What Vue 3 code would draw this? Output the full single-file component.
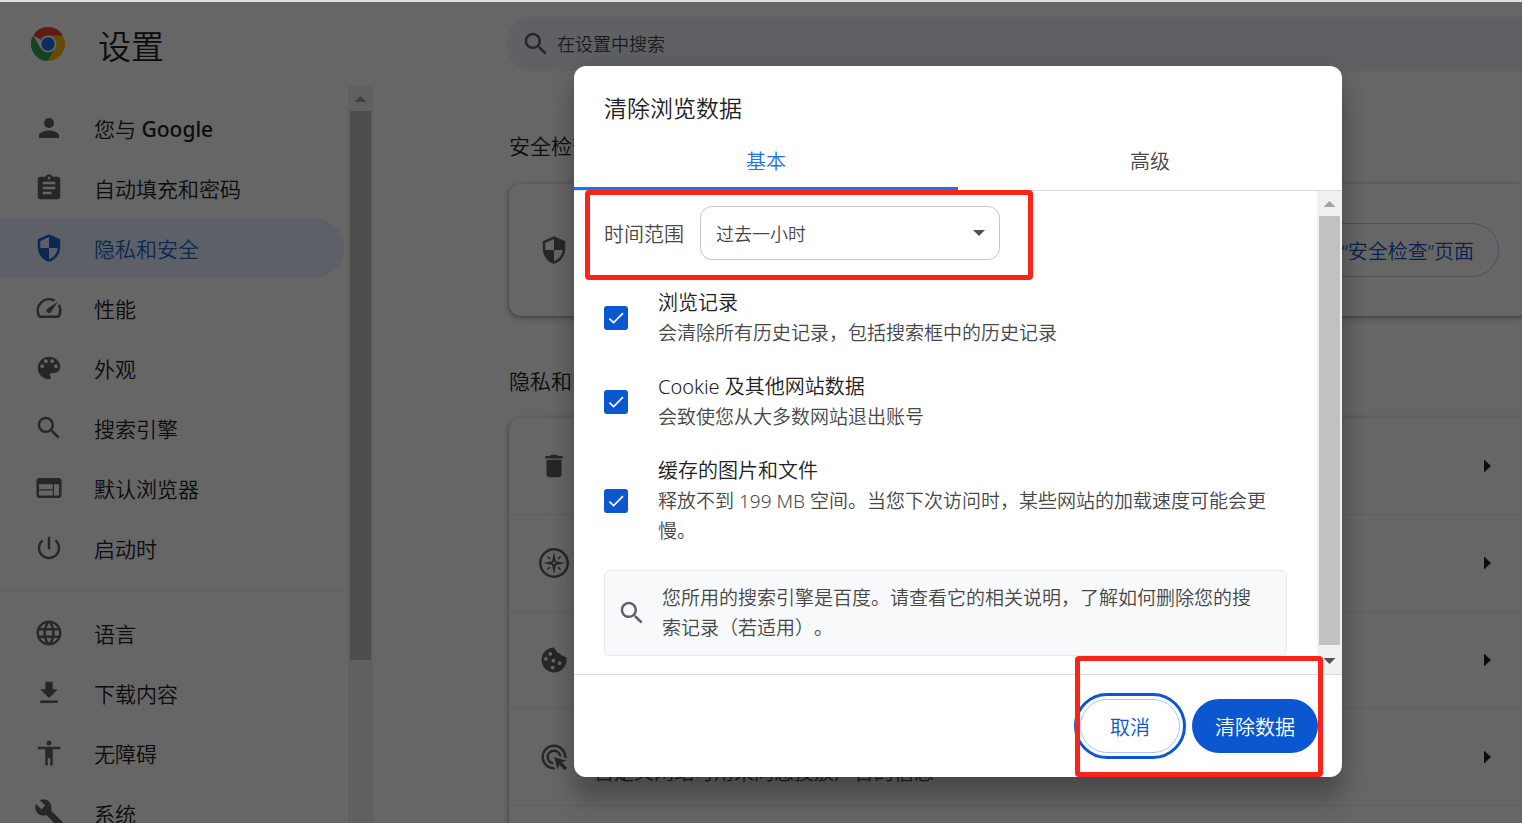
<template>
  <div class="app">
    <div class="page">
      <aside class="sidebar">
        <div class="brand">
          <svg class="logo" viewBox="0 0 48 48" aria-hidden="true">
            <path fill="#ea4335" d="M24 24 L3.2 12 A24 24 0 0 1 44.8 12 Z" />
            <path fill="#34a853" d="M3.2 12 A24 24 0 0 0 24 48 L34.4 30 L24 24 L13.6 30 Z" />
            <path fill="#fbbc04" d="M44.8 12 A24 24 0 0 1 24 48 L34.4 30 L24 24 L24 12 Z" />
            <circle cx="24" cy="24" r="12" fill="#fff" />
            <circle cx="24" cy="24" r="9.4" fill="#1a73e8" />
          </svg>
          <h1>设置</h1>
        </div>
        <div class="nav-wrap">
          <nav class="nav">
            <template v-for="item in navItems" :key="item.label">
              <hr v-if="item.divided" />
              <a href="#" class="nav-item" :class="{ active: item.active }" @click.prevent>
                <svg class="icon" viewBox="0 0 24 24" aria-hidden="true"><path :d="icons[item.icon]" /></svg>
                <span>{{ item.label }}<b v-if="item.strong">{{ item.strong }}</b></span>
              </a>
            </template>
          </nav>
          <div class="scrollbar" aria-hidden="true">
            <i class="arrow up"></i>
            <div class="thumb side-thumb"></div>
          </div>
        </div>
      </aside>

      <main class="content">
        <label class="search-bar">
          <svg class="icon" viewBox="0 0 24 24" aria-hidden="true"><path :d="icons.search" /></svg>
          <input type="text" placeholder="在设置中搜索" aria-label="在设置中搜索" />
        </label>

        <div class="sections">
          <h2>安全检查</h2>
          <div class="card check-card">
            <svg class="icon" viewBox="0 0 24 24" aria-hidden="true"><path :d="icons.shield" /></svg>
            <button class="outline-btn">前往“安全检查”页面</button>
          </div>

          <h2 class="privacy-title">隐私和安全</h2>
          <div class="card">
            <div v-for="row in rows" :key="row.icon" class="row">
              <svg class="icon" viewBox="0 0 24 24" aria-hidden="true">
                <path fill-rule="evenodd" :d="icons[row.icon]" />
              </svg>
              <div class="row-text">
                <div v-if="row.sub" class="sub">{{ row.sub }}</div>
              </div>
              <i class="arrow right"></i>
            </div>
          </div>
        </div>
      </main>
    </div>

    <div class="overlay">
      <div class="dialog" role="dialog" aria-labelledby="dialog-title">
        <h2 id="dialog-title" class="dialog-title">清除浏览数据</h2>
        <div class="tabs" role="tablist">
          <button
            v-for="tab in tabs"
            :key="tab"
            class="tab"
            :class="{ active: tab === currentTab }"
            role="tab"
            :aria-selected="tab === currentTab"
            @click="currentTab = tab"
          >
            {{ tab }}
          </button>
        </div>

        <div class="dialog-body">
          <div class="body-content">
            <div class="time-row marked">
              <label for="time-range">时间范围</label>
              <div class="select-wrap">
                <select id="time-range" v-model="timeRange">
                  <option v-for="range in ranges" :key="range">{{ range }}</option>
                </select>
                <i class="arrow down"></i>
              </div>
            </div>

            <label v-for="item in items" :key="item.title" class="check-item">
              <input v-model="item.checked" type="checkbox" />
              <span>
                <span class="item-title">{{ item.title }}</span>
                <span class="item-desc">{{ item.desc }}</span>
              </span>
            </label>

            <div class="notice">
              <svg class="icon" viewBox="0 0 24 24" aria-hidden="true"><path :d="icons.search" /></svg>
              <p>您所用的搜索引擎是百度。请查看它的相关说明，了解如何删除您的搜索记录（若适用）。</p>
            </div>
          </div>
          <div class="scrollbar" aria-hidden="true">
            <i class="arrow up"></i>
            <div class="thumb"></div>
            <i class="arrow down"></i>
          </div>
        </div>

        <div class="dialog-footer">
          <div class="actions marked">
            <button class="cancel-btn">取消</button>
            <button class="clear-btn">清除数据</button>
          </div>
        </div>
      </div>
    </div>
  </div>
</template>

<script setup>
import { ref } from 'vue'

const icons = {
  person: 'M12 12c2.21 0 4-1.79 4-4s-1.79-4-4-4-4 1.79-4 4 1.79 4 4 4zm0 2c-2.67 0-8 1.34-8 4v2h16v-2c0-2.66-5.33-4-8-4z',
  assignment: 'M19 3h-4.18C14.4 1.84 13.3 1 12 1c-1.3 0-2.4.84-2.82 2H5c-1.1 0-2 .9-2 2v14c0 1.1.9 2 2 2h14c1.1 0 2-.9 2-2V5c0-1.1-.9-2-2-2zm-7 0c.55 0 1 .45 1 1s-.45 1-1 1-1-.45-1-1 .45-1 1-1zm2 14H7v-2h7v2zm3-4H7v-2h10v2zm0-4H7V7h10v2z',
  shield: 'M12 1L3 5v6c0 5.55 3.84 10.74 9 12 5.16-1.26 9-6.45 9-12V5l-9-4zm0 10.99h7c-.53 4.12-3.28 7.79-7 8.94V12H5V6.3l7-3.11v8.8z',
  speed: 'M20.38 8.57l-1.23 1.85a8 8 0 0 1-.22 7.58H5.07A8 8 0 0 1 15.58 6.85l1.85-1.23A10 10 0 0 0 3.35 19a2 2 0 0 0 1.72 1h13.85a2 2 0 0 0 1.74-1 10 10 0 0 0-.27-10.44zm-9.79 6.84a2 2 0 0 0 2.83 0l5.66-8.49-8.49 5.66a2 2 0 0 0 0 2.83z',
  palette: 'M12 3c-4.97 0-9 4.03-9 9s4.03 9 9 9c.83 0 1.5-.67 1.5-1.5 0-.39-.15-.74-.39-1.01-.23-.26-.38-.61-.38-.99 0-.83.67-1.5 1.5-1.5H16c2.76 0 5-2.24 5-5 0-4.42-4.03-8-9-8zm-5.5 9c-.83 0-1.5-.67-1.5-1.5S5.67 9 6.5 9 8 9.67 8 10.5 7.33 12 6.5 12zm3-4C8.67 8 8 7.33 8 6.5S8.67 5 9.5 5s1.5.67 1.5 1.5S10.33 8 9.5 8zm5 0c-.83 0-1.5-.67-1.5-1.5S13.67 5 14.5 5s1.5.67 1.5 1.5S15.33 8 14.5 8zm3 4c-.83 0-1.5-.67-1.5-1.5S16.67 9 17.5 9s1.5.67 1.5 1.5-.67 1.5-1.5 1.5z',
  search: 'M15.5 14h-.79l-.28-.27C15.41 12.59 16 11.11 16 9.5 16 5.91 13.09 3 9.5 3S3 5.91 3 9.5 5.91 16 9.5 16c1.61 0 3.09-.59 4.23-1.57l.27.28v.79l5 4.99L20.49 19l-4.99-5zm-6 0C7.01 14 5 11.99 5 9.5S7.01 5 9.5 5 14 7.01 14 9.5 11.99 14 9.5 14z',
  web: 'M20 4H4c-1.1 0-1.99.9-1.99 2L2 18c0 1.1.9 2 2 2h16c1.1 0 2-.9 2-2V6c0-1.1-.9-2-2-2zm-5 14H4v-4h11v4zm0-5H4V9h11v4zm5 5h-4V9h4v9z',
  power: 'M13 3h-2v10h2V3zm4.83 2.17l-1.42 1.42C17.99 7.86 19 9.81 19 12c0 3.87-3.13 7-7 7s-7-3.13-7-7c0-2.19 1.01-4.14 2.58-5.42L6.17 5.17C4.23 6.82 3 9.26 3 12c0 4.97 4.03 9 9 9s9-4.03 9-9c0-2.74-1.23-5.18-3.17-6.83z',
  globe: 'M11.99 2C6.47 2 2 6.48 2 12s4.47 10 9.99 10C17.52 22 22 17.52 22 12S17.52 2 11.99 2zm6.93 6h-2.95c-.32-1.25-.78-2.45-1.38-3.56 1.84.63 3.37 1.91 4.33 3.56zM12 4.04c.83 1.2 1.48 2.53 1.91 3.96h-3.82c.43-1.43 1.08-2.76 1.91-3.96zM4.26 14C4.1 13.36 4 12.69 4 12s.1-1.36.26-2h3.38c-.08.66-.14 1.32-.14 2s.06 1.34.14 2H4.26zm.82 2h2.95c.32 1.25.78 2.45 1.38 3.56-1.84-.63-3.37-1.9-4.33-3.56zm2.95-8H5.08c.96-1.66 2.49-2.93 4.33-3.56C8.81 5.55 8.35 6.75 8.03 8zM12 19.96c-.83-1.2-1.48-2.53-1.91-3.96h3.82c-.43 1.43-1.08 2.76-1.91 3.96zM14.34 14H9.66c-.09-.66-.16-1.32-.16-2s.07-1.35.16-2h4.68c.09.65.16 1.32.16 2s-.07 1.34-.16 2zm.25 5.56c.6-1.11 1.06-2.31 1.38-3.56h2.95c-.96 1.65-2.49 2.93-4.33 3.56zM16.36 14c.08-.66.14-1.32.14-2s-.06-1.34-.14-2h3.38c.16.64.26 1.31.26 2s-.1 1.36-.26 2h-3.38z',
  download: 'M19 9h-4V3H9v6H5l7 7 7-7zM5 18v2h14v-2H5z',
  accessibility: 'M12 2c1.1 0 2 .9 2 2s-.9 2-2 2-2-.9-2-2 .9-2 2-2zm9 7h-6v13h-2v-6h-2v6H9V9H3V7h18v2z',
  wrench: 'M22.7 19l-9.1-9.1c.9-2.3.4-5-1.5-6.9-2-2-5-2.4-7.4-1.3L9 6 6 9 1.6 4.7C.4 7.1.9 10.1 2.9 12.1c1.9 1.9 4.6 2.4 6.9 1.5l9.1 9.1c.4.4 1 .4 1.4 0l2.3-2.3c.5-.4.5-1.1.1-1.4z',
  trash: 'M6 19c0 1.1.9 2 2 2h8c1.1 0 2-.9 2-2V7H6v12zM19 4h-3.5l-1-1h-5l-1 1H5v2h14V4z',
  compass: 'M12 0a12 12 0 1 0 0 24 12 12 0 0 0 0-24zm0 2a10 10 0 1 1 0 20 10 10 0 0 1 0-20zM12 3l1.5 7.5L21 12l-7.5 1.5L12 21l-1.5-7.5L3 12l7.5-1.5zM12 11a1 1 0 1 0 0 2 1 1 0 0 0 0-2zM6.3 7l.7-.7 2.3 1.900-1.1 1.1zM17 6.3l.7.7-1.9 2.3-1.1-1.1zM17.7 17l-.7.7-2.3-1.9 1.1-1.1zM7 17.7l-.7-.7 1.9-2.3 1.1 1.1z',
  cookie: 'M12.5 2A10 10 0 1 0 22 11.5c0-.9-.1-1.5-.3-2.2-.9.5-2 .1-2.3-.9-1.2.4-2.4-.5-2.3-1.9-1.7.3-3-.6-3.1-2-1.1-.2-1.7-1.2-1.5-2.500zM9 5.500a1.5 1.5 0 1 1 0 3 1.5 1.5 0 0 1 0-3zM5.5 9.5a1.5 1.5 0 1 1 0 3 1.5 1.5 0 0 1 0-3zM11.5 11a1.5 1.5 0 1 1 0 3 1.5 1.5 0 0 1 0-3zM16.5 13a1.5 1.5 0 1 1 0 3 1.5 1.5 0 0 1 0-3zM10.9 16.5a1.5 1.5 0 1 1 0 3 1.5 1.5 0 0 1 0-3z',
  adsClick: 'M11.71 17.99A5.993 5.993 0 0 1 6 12c0-3.31 2.69-6 6-6 3.22 0 5.84 2.53 5.99 5.71l-2.1-.63a3.999 3.999 0 1 0-4.81 4.81l.63 2.1zM22 12c0 .3-.01.6-.04.9l-1.97-.59c.01-.1.01-.21.01-.31 0-4.42-3.58-8-8-8s-8 3.58-8 8 3.58 8 8 8c.1 0 .21 0 .31-.01l.59 1.97c-.3.03-.6.04-.9.04-5.52 0-10-4.48-10-10S6.48 2 12 2s10 4.48 10 10zm-3.77 4.26L22 15l-10-3 3 10 1.26-3.77 4.27 4.27 1.98-1.98-4.28-4.26z'
}

const navItems = [
  { icon: 'person', label: '您与 ', strong: 'Google' },
  { icon: 'assignment', label: '自动填充和密码' },
  { icon: 'shield', label: '隐私和安全', active: true },
  { icon: 'speed', label: '性能' },
  { icon: 'palette', label: '外观' },
  { icon: 'search', label: '搜索引擎' },
  { icon: 'web', label: '默认浏览器' },
  { icon: 'power', label: '启动时' },
  { icon: 'globe', label: '语言', divided: true },
  { icon: 'download', label: '下载内容' },
  { icon: 'accessibility', label: '无障碍' },
  { icon: 'wrench', label: '系统' }
]

const rows = [
  { icon: 'trash' },
  { icon: 'compass' },
  { icon: 'cookie' },
  { icon: 'adsClick', sub: '自定义网站可用来向您投放广告的信息' },
  { icon: 'shield' }
]

const tabs = ['基本', '高级']
const currentTab = ref('基本')

const ranges = ['过去一小时', '过去 24 小时', '过去 7 天', '过去 4 周', '时间不限']
const timeRange = ref('过去一小时')

const items = ref([
  { title: '浏览记录', desc: '会清除所有历史记录，包括搜索框中的历史记录', checked: true },
  { title: 'Cookie 及其他网站数据', desc: '会致使您从大多数网站退出账号', checked: true },
  {
    title: '缓存的图片和文件',
    desc: '释放不到 199 MB 空间。当您下次访问时，某些网站的加载速度可能会更慢。',
    checked: true
  }
])
</script>

<style>
body {
  margin: 0;
  overflow: hidden;
}
</style>

<style scoped>
.app {
  position: relative;
  box-sizing: border-box;
  height: 100vh;
  overflow: hidden;
  border-top: 2px solid #dfe1e5;
  background: #fff;
  color: #202124;
  font-family: "Noto Sans", "Noto Sans CJK SC", sans-serif;
  font-size: 21px;
  font-weight: 350;
  line-height: 30px;
  text-spacing-trim: space-all;
}

h1,
h2,
p {
  margin: 0;
  font-weight: 350;
}

h2 {
  font-size: 21px;
}

button,
input,
select {
  font: inherit;
}

button {
  cursor: pointer;
}

.icon {
  flex: none;
  width: 30px;
  height: 30px;
  fill: #5f6368;
}

.page {
  display: flex;
  height: 100%;
}

/* 左侧导航 */
.sidebar {
  display: flex;
  flex-direction: column;
  flex: none;
  width: 373px;
}

.brand {
  display: flex;
  align-items: center;
  flex: none;
  gap: 33px;
  height: 84px;
  padding-left: 31px;
}

.logo {
  width: 34px;
  height: 34px;
}

h1 {
  padding-top: 5px;
  font-size: 33px;
}

.nav-wrap {
  display: flex;
  flex: 1;
  min-height: 0;
}

.nav {
  flex: 1;
  padding-top: 12px;
  overflow: hidden;
}

.nav hr {
  margin: 12px 0;
  border: 0;
  border-top: 1px solid #e8eaed;
}

.nav-item {
  display: flex;
  align-items: center;
  gap: 30px;
  height: 60px;
  margin-right: 4px;
  padding-left: 34px;
  border-radius: 0 30px 30px 0;
  color: inherit;
  text-decoration: none;
}

.nav-item span {
  padding-top: 2px;
}

.nav-item b {
  font-weight: 500;
}

.nav-item.active {
  background: #e8f0fe;
  color: #1967d2;
}

.nav-item.active .icon {
  fill: #1967d2;
}

/* 滚动条 */
.scrollbar {
  display: flex;
  flex-direction: column;
  align-items: center;
  flex: none;
  width: 25px;
  background: #f1f1f1;
}

.scrollbar .arrow.up {
  margin: 10px 0 9px;
}

.scrollbar .arrow.down {
  margin: 13px 0 10px;
}

.thumb {
  flex: 1;
  width: 21px;
  background: #c1c1c1;
}

.side-thumb {
  flex: 0 0 549px;
}

.arrow {
  display: block;
  flex: none;
  width: 12px;
  height: 6px;
  background: #505050;
}

.arrow.up {
  background: #a3a3a3;
  clip-path: polygon(50% 0, 100% 100%, 0 100%);
}

.arrow.down {
  clip-path: polygon(0 0, 100% 0, 50% 100%);
}

.arrow.right {
  width: 7px;
  height: 13px;
  background: #202124;
  clip-path: polygon(0 0, 100% 50%, 0 100%);
}

/* 主内容 */
.content {
  flex: 1;
  min-width: 0;
  padding: 15px 0 0 133px;
}

.search-bar {
  display: flex;
  align-items: center;
  gap: 6px;
  height: 54px;
  padding-left: 15px;
  border-radius: 27px 0 0 27px;
  background: #edf2fc;
}

.search-bar input {
  flex: 1;
  border: 0;
  padding: 0;
  outline: 0;
  background: none;
  font-size: 18px;
}

.search-bar input::placeholder {
  color: #474747;
  opacity: 1;
}

.sections {
  margin: 60px -7px 0 3px;
}

.card {
  border-radius: 12px;
  background: #fff;
  box-shadow: 0 1px 3px rgba(60, 64, 67, 0.4), 0 2px 6px 2px rgba(60, 64, 67, 0.2);
}

.check-card {
  display: flex;
  align-items: center;
  justify-content: space-between;
  box-sizing: border-box;
  height: 132px;
  margin-top: 23px;
  padding: 0 30px;
}

.outline-btn {
  height: 54px;
  padding: 3px 24px 0;
  border: 1px solid #a8c7fa;
  border-radius: 27px;
  background: none;
  color: #0b57d0;
  font-size: 20px;
}

.privacy-title {
  margin: 50px 0 22px;
}

.row {
  display: flex;
  align-items: center;
  gap: 25px;
  height: 96px;
  padding: 0 38px 0 30px;
  border-bottom: 1px solid #e8eaed;
}

.row-text {
  flex: 1;
  font-size: 20px;
}

.sub {
  padding-top: 32px;
  color: #474747;
}

/* 对话框 */
.overlay {
  position: absolute;
  inset: 0;
  display: flex;
  align-items: flex-start;
  justify-content: center;
  padding: 64px 0 0 394px;
  background: rgba(0, 0, 0, 0.6);
}

.dialog {
  width: 768px;
  border-radius: 12px;
  background: #fff;
  box-shadow: 0 0 24px rgba(0, 0, 0, 0.12), 0 24px 24px rgba(0, 0, 0, 0.24);
}

.dialog-title {
  padding: 24px 30px 0;
  font-size: 23px;
  line-height: 36px;
}

.tabs {
  display: flex;
  padding-top: 4px;
  border-bottom: 1px solid #dadce0;
}

.tab {
  flex: 1;
  height: 60px;
  padding: 6px 0 0;
  border: 0;
  border-bottom: 3px solid transparent;
  background: none;
  color: #474747;
  font-size: 20px;
}

.tab.active {
  border-color: #1a73e8;
  color: #1a73e8;
}

.dialog-body {
  display: flex;
  border-bottom: 1px solid #dadce0;
}

.body-content {
  display: flex;
  flex-direction: column;
  flex: 1;
  gap: 24px;
  padding: 15px 30px 18px;
}

.marked {
  position: relative;
}

.marked::after {
  content: '';
  position: absolute;
  border: 5px solid #fc2318;
  border-radius: 4px;
  pointer-events: none;
}

.time-row {
  display: flex;
  align-items: center;
  gap: 16px;
  margin-bottom: 4px;
  color: #474747;
  font-size: 20px;
}

.time-row label {
  padding-top: 3px;
}

.time-row::after {
  inset: -16px 254px -20px -19px;
}

.select-wrap {
  display: flex;
  align-items: center;
  width: 300px;
}

.select-wrap select {
  flex: 1;
  height: 54px;
  padding: 2px 15px 0;
  border: 1px solid #c7c7c7;
  border-radius: 12px;
  appearance: none;
  background: #fff;
  color: #474747;
  font-size: 18px;
}

.select-wrap .arrow {
  margin: 0 15px 0 -27px;
  pointer-events: none;
}

.check-item {
  display: flex;
  align-items: center;
  gap: 30px;
}

.check-item input {
  display: grid;
  place-items: center;
  flex: none;
  width: 24px;
  height: 24px;
  margin: 0;
  border: 2px solid #5f6368;
  border-radius: 3px;
  appearance: none;
}

.check-item input:checked {
  border-color: #0b57d0;
  background: #0b57d0;
}

.check-item input:checked::before {
  content: '';
  width: 20px;
  height: 20px;
  background: #fff;
  clip-path: polygon(38% 67%, 20% 50%, 14% 56%, 38% 79%, 88% 29%, 82% 23%);
}

.item-title,
.item-desc {
  display: block;
}

.item-title {
  font-size: 20px;
}

.item-desc {
  padding-right: 3px;
  color: #474747;
  font-size: 19px;
}

.notice {
  display: flex;
  align-items: center;
  gap: 15px;
  padding: 12px 19px 12px 12px;
  border: 1px solid #e8eaed;
  border-radius: 6px;
  background: #f8f9fb;
  color: #474747;
  font-size: 19px;
}

.dialog-footer {
  display: flex;
  justify-content: flex-end;
  padding: 24px;
}

.actions {
  display: flex;
  gap: 12px;
}

.actions::after {
  inset: -43px -5px -24px -5px;
}

.actions button {
  height: 54px;
  padding: 3px 23px 0;
  border: 0;
  border-radius: 27px;
  font-size: 20px;
}

.actions .cancel-btn {
  padding: 3px 29px 0;
  border: 1px solid #a8c7fa;
  outline: 3px solid #0b57d0;
  outline-offset: 3px;
  background: #fff;
  color: #0b57d0;
}

.actions .clear-btn {
  background: #0b57d0;
  color: #fff;
}
</style>
